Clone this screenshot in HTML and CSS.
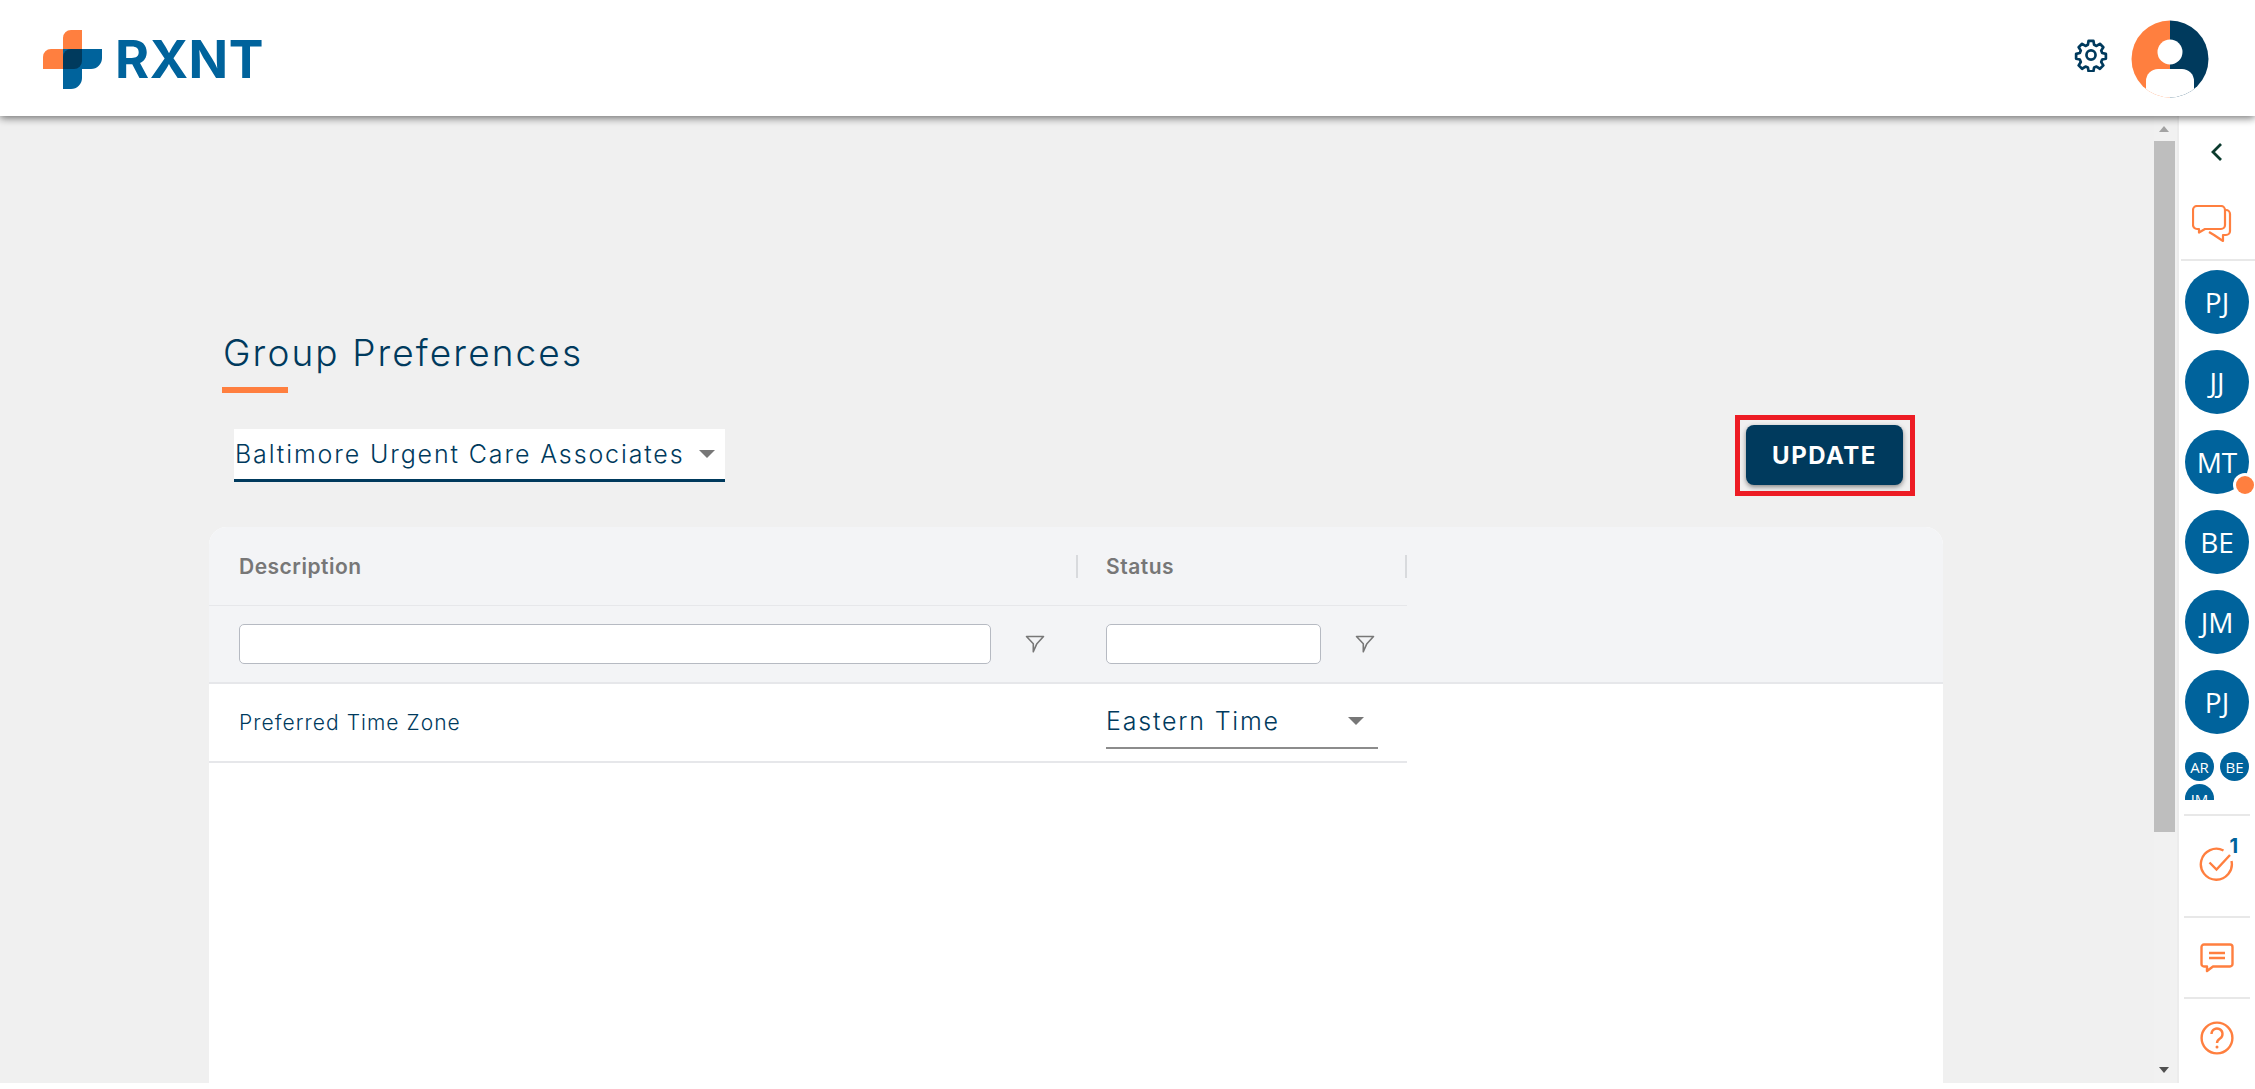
FILE: index.html
```html
<!DOCTYPE html>
<html lang="en">
<head>
<meta charset="utf-8">
<title>Group Preferences</title>
<link rel="stylesheet" href="styles.css">
</head>
<body>
<div class="app">
  <header class="topbar">
    <div class="brand">
      <svg class="brand-mark" width="60" height="60" viewBox="0 0 60 60">
        <path fill="#ff7f3f" d="M28 0h11v39H0V27a8 8 0 0 1 8-8h12v-11a8 8 0 0 1 8-8z"/>
        <path fill="#00639c" d="M20 19h39v9a11 11 0 0 1-11 11h-9v9a11 11 0 0 1-11 11h-8z"/>
        <path fill="#003a5d" d="M20 27a8 8 0 0 1 8-8h11v12a8 8 0 0 1-8 8H20z"/>
      </svg>
      <span class="brand-name">RXNT</span>
    </div>
    <div class="top-actions">
      <svg class="gear" width="34" height="34" viewBox="0 0 24 24" fill="none" stroke="#003a5d" stroke-width="1.9" stroke-linejoin="round">
        <circle cx="12" cy="12" r="3.2"/>
        <path d="M10.3 2h3.4l.5 2.8 1.7.8 2.4-1.5 2.4 2.4-1.5 2.4.7 1.7 2.6.6v3.4l-2.6.6-.7 1.7 1.5 2.4-2.4 2.4-2.4-1.5-1.7.7-.5 2.6h-3.4l-.5-2.6-1.7-.7-2.4 1.5-2.4-2.4 1.5-2.4-.7-1.7-2.6-.6v-3.4l2.6-.6.7-1.7-1.5-2.4 2.4-2.4 2.4 1.5 1.7-.8z"/>
      </svg>
      <svg class="me" width="78" height="78" viewBox="0 0 78 78">
        <defs><clipPath id="meclip"><circle cx="39" cy="39" r="38.5"/></clipPath></defs>
        <g clip-path="url(#meclip)">
          <rect width="39" height="78" fill="#ff7f3f"/>
          <rect x="39" width="39" height="78" fill="#003a5d"/>
          <circle cx="39" cy="32" r="12.5" fill="#fff"/>
          <rect x="15" y="49" width="48" height="40" rx="12" fill="#fff"/>
        </g>
      </svg>
    </div>
  </header>

  <div class="workspace">
    <main class="main">
      <div class="content">
        <h1 class="page-title">Group Preferences</h1>
        <div class="title-rule"></div>
        <div class="toolbar">
          <div class="group-select">
            <span>Baltimore Urgent Care Associates</span>
            <i class="caret"></i>
          </div>
          <div class="highlight"><button class="update-btn">UPDATE</button></div>
        </div>
        <section class="card">
          <div class="grid-head">
            <div class="row head-row">
              <div class="cell col-desc"><span>Description</span></div>
              <div class="cell col-status"><span>Status</span></div>
            </div>
            <div class="row filter-row">
              <div class="cell col-desc">
                <input class="filter-input" type="text" aria-label="Description filter">
                <svg class="funnel" width="20" height="20" viewBox="0 0 20 20" fill="none" stroke="#777" stroke-width="1.6" stroke-linejoin="round"><path d="M1.5 2.5h17l-6.6 7.2-3.6 8v-8z"/></svg>
              </div>
              <div class="cell col-status">
                <input class="filter-input short" type="text" aria-label="Status filter">
                <svg class="funnel" width="20" height="20" viewBox="0 0 20 20" fill="none" stroke="#777" stroke-width="1.6" stroke-linejoin="round"><path d="M1.5 2.5h17l-6.6 7.2-3.6 8v-8z"/></svg>
              </div>
            </div>
          </div>
          <div class="row body-row">
            <div class="cell col-desc">Preferred Time Zone</div>
            <div class="cell col-status">
              <div class="zone-select"><span>Eastern Time</span><i class="caret"></i></div>
            </div>
          </div>
        </section>
      </div>
      <div class="scrollbar">
        <i class="sb-up"></i>
        <div class="sb-track"><div class="sb-thumb"></div></div>
        <i class="sb-down"></i>
      </div>
    </main>

    <aside class="rail">
      <svg class="chevron" width="14" height="20" viewBox="0 0 14 20" fill="none" stroke="#0b3b2e" stroke-width="2.8"><path d="M11 2 3 10l8 8"/></svg>
      <div class="rail-chat">
        <svg width="40" height="38" viewBox="0 0 40 38" fill="none" stroke="#ff7f3f" stroke-width="2.2" stroke-linejoin="round">
          <path d="M5 1h24a4 4 0 0 1 4 4v15a4 4 0 0 1-4 4H13l-6 3.5V24H5a4 4 0 0 1-4-4V5a4 4 0 0 1 4-4z"/>
          <path d="M33 5h1a4 4 0 0 1 4 4v17a4 4 0 0 1-4 4h-3v6l-9-6-5-3"/>
        </svg>
      </div>
      <div class="people">
        <div class="person">PJ</div>
        <div class="person">JJ</div>
        <div class="person">MT<i class="presence"></i></div>
        <div class="person">BE</div>
        <div class="person">JM</div>
        <div class="person">PJ</div>
        <div class="mini-people">
          <div class="mini">AR</div>
          <div class="mini">BE</div>
          <div class="mini">JM</div>
        </div>
      </div>
      <div class="rail-tool tool-task">
        <svg width="36" height="36" viewBox="0 0 36 36" fill="none" stroke="#ff7f3f" stroke-width="2.4">
          <path d="M32.5 15a15.5 15.5 0 1 1-8-10.5"/>
          <path d="M10.5 16.5l7 7L31 9"/>
        </svg>
        <b class="task-count">1</b>
      </div>
      <div class="rail-tool tool-msg">
        <svg width="34" height="30" viewBox="0 0 34 30" fill="none" stroke="#ff7f3f" stroke-width="2.4" stroke-linejoin="round">
          <path d="M4 1.5h26a2.5 2.5 0 0 1 2.5 2.5v17a2.5 2.5 0 0 1-2.5 2.5H13l-6 4.5v-4.5H4a2.5 2.5 0 0 1-2.5-2.5V4A2.5 2.5 0 0 1 4 1.5z"/>
          <path d="M9 10h16M9 15h16"/>
        </svg>
      </div>
      <div class="rail-tool tool-help">
        <svg width="34" height="34" viewBox="0 0 34 34" fill="none" stroke="#ff7f3f" stroke-width="2.4">
          <circle cx="17" cy="17" r="15.4"/>
          <path d="M11.5 13a5.5 5.5 0 1 1 8.5 4.6c-2 1.3-3 2.3-3 4.4"/>
          <circle cx="17" cy="26" r="1.5" fill="#ff7f3f" stroke="none"/>
        </svg>
      </div>
    </aside>
  </div>
</div>
</body>
</html>
```
FILE: styles.css
```css
* { box-sizing: border-box; }
html, body { margin: 0; height: 100%; background: #fff; overflow: hidden; }
body { font-family: "Inter", "Lato", sans-serif; color: #003a5d; }

.app { display: flex; flex-direction: column; height: 1089px; }

.topbar {
  flex: 0 0 116px;
  display: flex;
  align-items: center;
  justify-content: space-between;
  padding: 0 46px 0 43px;
  background: #fff;
  box-shadow: 0 2px 8px rgba(0, 0, 0, .55);
  position: relative;
  z-index: 2;
}
.brand { display: flex; align-items: center; gap: 12px; margin-top: 3px; }
.brand-mark { display: block; }
.brand-name {
  font-family: "Inter", sans-serif;
  font-weight: 700;
  font-size: 52px;
  line-height: 60px;
  color: #00639c;
  letter-spacing: .5px;
}
.top-actions { display: flex; align-items: center; gap: 23px; }
.gear { display: block; margin-top: -7px; }
.me { display: block; margin-top: 1px; }

.workspace { flex: 0 0 967px; display: flex; min-height: 0; }

.main { flex: 0 0 2177px; display: flex; background: #f0f0f0; }
.content { flex: 1; padding: 214px 0 0 209px; min-width: 0; overflow: hidden; display: flex; flex-direction: column; }

.page-title {
  margin: 0 0 0 14px;
  font-size: 37px;
  line-height: 46px;
  font-weight: 300;
  letter-spacing: 2.1px;
  color: #003a5d;
}
.title-rule { width: 66px; height: 6px; margin: 11px 0 0 13px; background: #ff7f3f; }

.toolbar {
  width: 1681px;
  display: flex;
  align-items: center;
  justify-content: space-between;
  margin: 22px 0 31px 25px;
}
.group-select {
  width: 491px;
  height: 53px;
  display: flex;
  align-items: center;
  justify-content: space-between;
  padding: 0 10px 0 1px;
  background: #fff;
  border-bottom: 3px solid #003a5d;
  font-size: 25px;
  font-weight: 300;
  letter-spacing: 1.87px;
}
.caret {
  display: block;
  width: 0;
  height: 0;
  border-left: 8px solid transparent;
  border-right: 8px solid transparent;
  border-top: 8px solid #777;
}
.highlight { border: 5px solid #ed1c24; padding: 5px 7px 6px 6px; }
.update-btn {
  display: block;
  width: 157px;
  height: 60px;
  border: 0;
  border-radius: 8px;
  background: #003a5d;
  color: #fff;
  font-family: inherit;
  font-size: 24px;
  font-weight: 700;
  letter-spacing: 1.5px;
  box-shadow: 0 2px 5px rgba(0, 0, 0, .45);
}

.card {
  width: 1734px;
  flex: 1;
  background: #fff;
  border-radius: 18px 18px 0 0;
  overflow: hidden;
}
.grid-head { background: #f3f4f6; border-bottom: 2px solid #e6e7ea; }
.row { display: flex; width: 1198px; }
.cell { display: flex; align-items: center; }
.col-desc { flex: 0 0 869px; padding-left: 30px; }
.col-status { flex: 0 0 329px; padding-left: 28px; }

.head-row { height: 79px; border-bottom: 1px solid #e6e7ea; font-size: 21px; font-weight: 600; color: #777; letter-spacing: .5px; }
.head-row .cell { position: relative; }
.head-row .cell::after {
  content: "";
  position: absolute;
  right: 0;
  top: 28px;
  width: 2px;
  height: 23px;
  background: #d8dadd;
}
.filter-row { height: 76px; padding-bottom: 1px; }
.filter-input {
  height: 40px;
  width: 752px;
  border: 1px solid #b6bac2;
  border-radius: 5px;
  background: #fff;
  margin: 0;
  padding: 0;
  outline: 0;
}
.filter-input.short { width: 215px; }
.funnel { margin-left: 34px; display: block; }

.body-row {
  width: 1198px;
  height: 79px;
  border-bottom: 2px solid #e6e7ea;
  font-size: 21px;
  font-weight: 300;
  letter-spacing: 1.05px;
}
.zone-select {
  width: 272px;
  height: 52px;
  display: flex;
  align-items: center;
  justify-content: space-between;
  padding: 0 14px 1px 0;
  border-bottom: 2px solid #8c8c8c;
  font-size: 25px;
  font-weight: 300;
  letter-spacing: 1.8px;
}

.scrollbar { flex: 0 0 23px; padding-right: 2px; display: flex; flex-direction: column; align-items: stretch; background: #f1f1f1; }
.sb-up, .sb-down { flex: 0 0 25px; display: block; position: relative; }
.sb-up::before, .sb-down::before {
  content: "";
  position: absolute;
  left: 5px;
  width: 0;
  height: 0;
  border-left: 5.5px solid transparent;
  border-right: 5.5px solid transparent;
}
.sb-up::before { top: 10px; border-bottom: 6px solid #a3a3a3; }
.sb-down::before { top: 9px; border-top: 6px solid #505050; }
.sb-track { flex: 1; }
.sb-thumb { height: 691px; background: #bebebe; }

.rail {
  flex: 1;
  display: flex;
  flex-direction: column;
  align-items: center;
  background: #fff;
  border-left: 2px solid #ececec;
}
.chevron { display: block; margin: 26px 0 0 0; }
.rail-chat {
  align-self: stretch;
  height: 99px;
  margin-left: 2px;
  display: flex;
  justify-content: center;
  padding-top: 43px;
  padding-right: 12px;
  border-bottom: 2px solid #e8e8e8;
}
.rail-chat svg { display: block; }
.people { width: 64px; margin-top: 9px; display: flex; flex-direction: column; gap: 16px; }
.person {
  position: relative;
  width: 64px;
  height: 64px;
  border-radius: 50%;
  background: #00639c;
  color: #fff;
  font-family: "Open Sans", sans-serif;
  font-size: 28px;
  display: flex;
  align-items: center;
  justify-content: center;
}
.presence {
  position: absolute;
  right: -5px;
  bottom: 0;
  width: 18px;
  height: 18px;
  border-radius: 50%;
  background: #ff7f3f;
  box-shadow: 0 0 0 3px #fff;
}
.mini-people {
  display: flex;
  flex-wrap: wrap;
  justify-content: space-between;
  align-content: flex-start;
  height: 48px;
  overflow: hidden;
  row-gap: 3px;
  margin-top: 2px;
}
.mini {
  width: 29px;
  height: 29px;
  border-radius: 50%;
  background: #00639c;
  color: #fff;
  font-size: 15px;
  font-family: "Open Sans", sans-serif;
  display: flex;
  align-items: center;
  justify-content: center;
}
.rail-tool {
  width: 66px;
  position: relative;
  display: flex;
  align-items: center;
  justify-content: center;
  border-top: 2px solid #e8e8e8;
}
.rail-tool svg { display: block; }
.tool-task { height: 102px; margin-top: 14px; padding-bottom: 4px; }
.tool-msg { height: 81px; }
.tool-help { height: 84px; padding-bottom: 5px; }
.task-count {
  position: absolute;
  top: 20px;
  right: 12px;
  font-size: 20px;
  line-height: 20px;
  color: #00639c;
  font-weight: 700;
}
```
